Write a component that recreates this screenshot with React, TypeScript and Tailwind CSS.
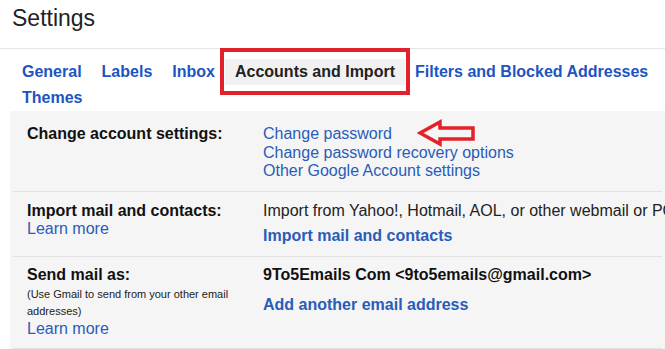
import React from "react";

const tabs = [
  { label: "General" },
  { label: "Labels" },
  { label: "Inbox" },
  { label: "Accounts and Import", active: true },
  { label: "Filters and Blocked Addresses" },
  { label: "Themes" },
];

function Tab({ label, active }: { label: string; active?: boolean }) {
  return (
    <div
      className={`h-[26px] px-[10px] leading-[26px] text-[16px] font-bold whitespace-nowrap ${
        active ? "bg-[#f1f1f1] text-[#222]" : "text-[#1c55c2]"
      }`}
    >
      {label}
    </div>
  );
}

function Link({ children, bold }: { children: React.ReactNode; bold?: boolean }) {
  return (
    <div className={`text-[#2a5cb8] ${bold ? "font-bold text-[#1c55c2]" : ""}`}>{children}</div>
  );
}

function RedArrow() {
  return (
    <svg
      className="absolute left-[417px] top-[119px]"
      width="60"
      height="28"
      viewBox="0 0 60 28"
    >
      <polygon
        points="3,14 23,3 23,9 56,9 56,20 23,20 23,25"
        fill="none"
        stroke="#e3212b"
        strokeWidth="3.5"
        strokeLinejoin="miter"
      />
    </svg>
  );
}

export default function App() {
  return (
    <div
      className="relative w-[665px] h-[349px] overflow-hidden bg-white text-[#222]"
      style={{ fontFamily: '"Liberation Sans", Arial, sans-serif' }}
    >
      {/* header */}
      <div className="h-[49px] pl-[12px] pt-[5px] border-b border-[#e5e5e5]">
        <h1 className="text-[23px] leading-[27px] font-normal text-[#222]">Settings</h1>
      </div>

      {/* tabs */}
      <div className="relative flex flex-wrap pl-[12px] pt-[10px] pr-[6px]">
        {tabs.map((t) => (
          <Tab key={t.label} label={t.label} active={t.active} />
        ))}
        <div className="absolute left-[220px] top-[-1px] w-[190px] h-[47px] border-[4px] border-[#e3212b]" />
      </div>

      {/* settings table */}
      <div className="ml-[10px] bg-[#f5f5f5] px-[3px] text-[16px] leading-[18px]">
        <div className="flex pl-[14px] pt-[14px] pb-[10px] border-b border-[#e3e3e3]">
          <div className="w-[236px] shrink-0 font-bold text-[#111] leading-[18.5px]">Change account settings:</div>
          <div className="leading-[18.5px]">
            <Link>Change password</Link>
            <Link>Change password recovery options</Link>
            <Link>Other Google Account settings</Link>
          </div>
        </div>

        <div className="flex pl-[14px] pt-[10px] pb-[11px] border-b border-[#e3e3e3]">
          <div className="w-[236px] shrink-0">
            <div className="font-bold text-[#111]">Import mail and contacts:</div>
            <div className="text-[#2a5cb8] leading-[17px]">Learn more</div>
          </div>
          <div className="min-w-0">
            <div className="whitespace-nowrap">
              Import from Yahoo!, Hotmail, AOL, or other webmail or POP3 accounts.
            </div>
            <div className="mt-[7px]">
              <Link bold>Import mail and contacts</Link>
            </div>
          </div>
        </div>

        <div className="flex pl-[14px] pt-[9px] pb-[10px] border-b border-[#e3e3e3]">
          <div className="w-[236px] shrink-0">
            <div className="font-bold text-[#111]">Send mail as:</div>
            <div className="mt-[2px] text-[11px] leading-[17px] text-[#222]">
              (Use Gmail to send from your other email
              <br />
              addresses)
            </div>
            <div className="text-[#2a5cb8]">Learn more</div>
          </div>
          <div>
            <div className="font-bold text-[#111] whitespace-nowrap">
              9To5Emails Com &lt;9to5emails@gmail.com&gt;
            </div>
            <div className="mt-[12px]">
              <Link bold>Add another email address</Link>
            </div>
          </div>
        </div>
      </div>

      <RedArrow />
    </div>
  );
}
